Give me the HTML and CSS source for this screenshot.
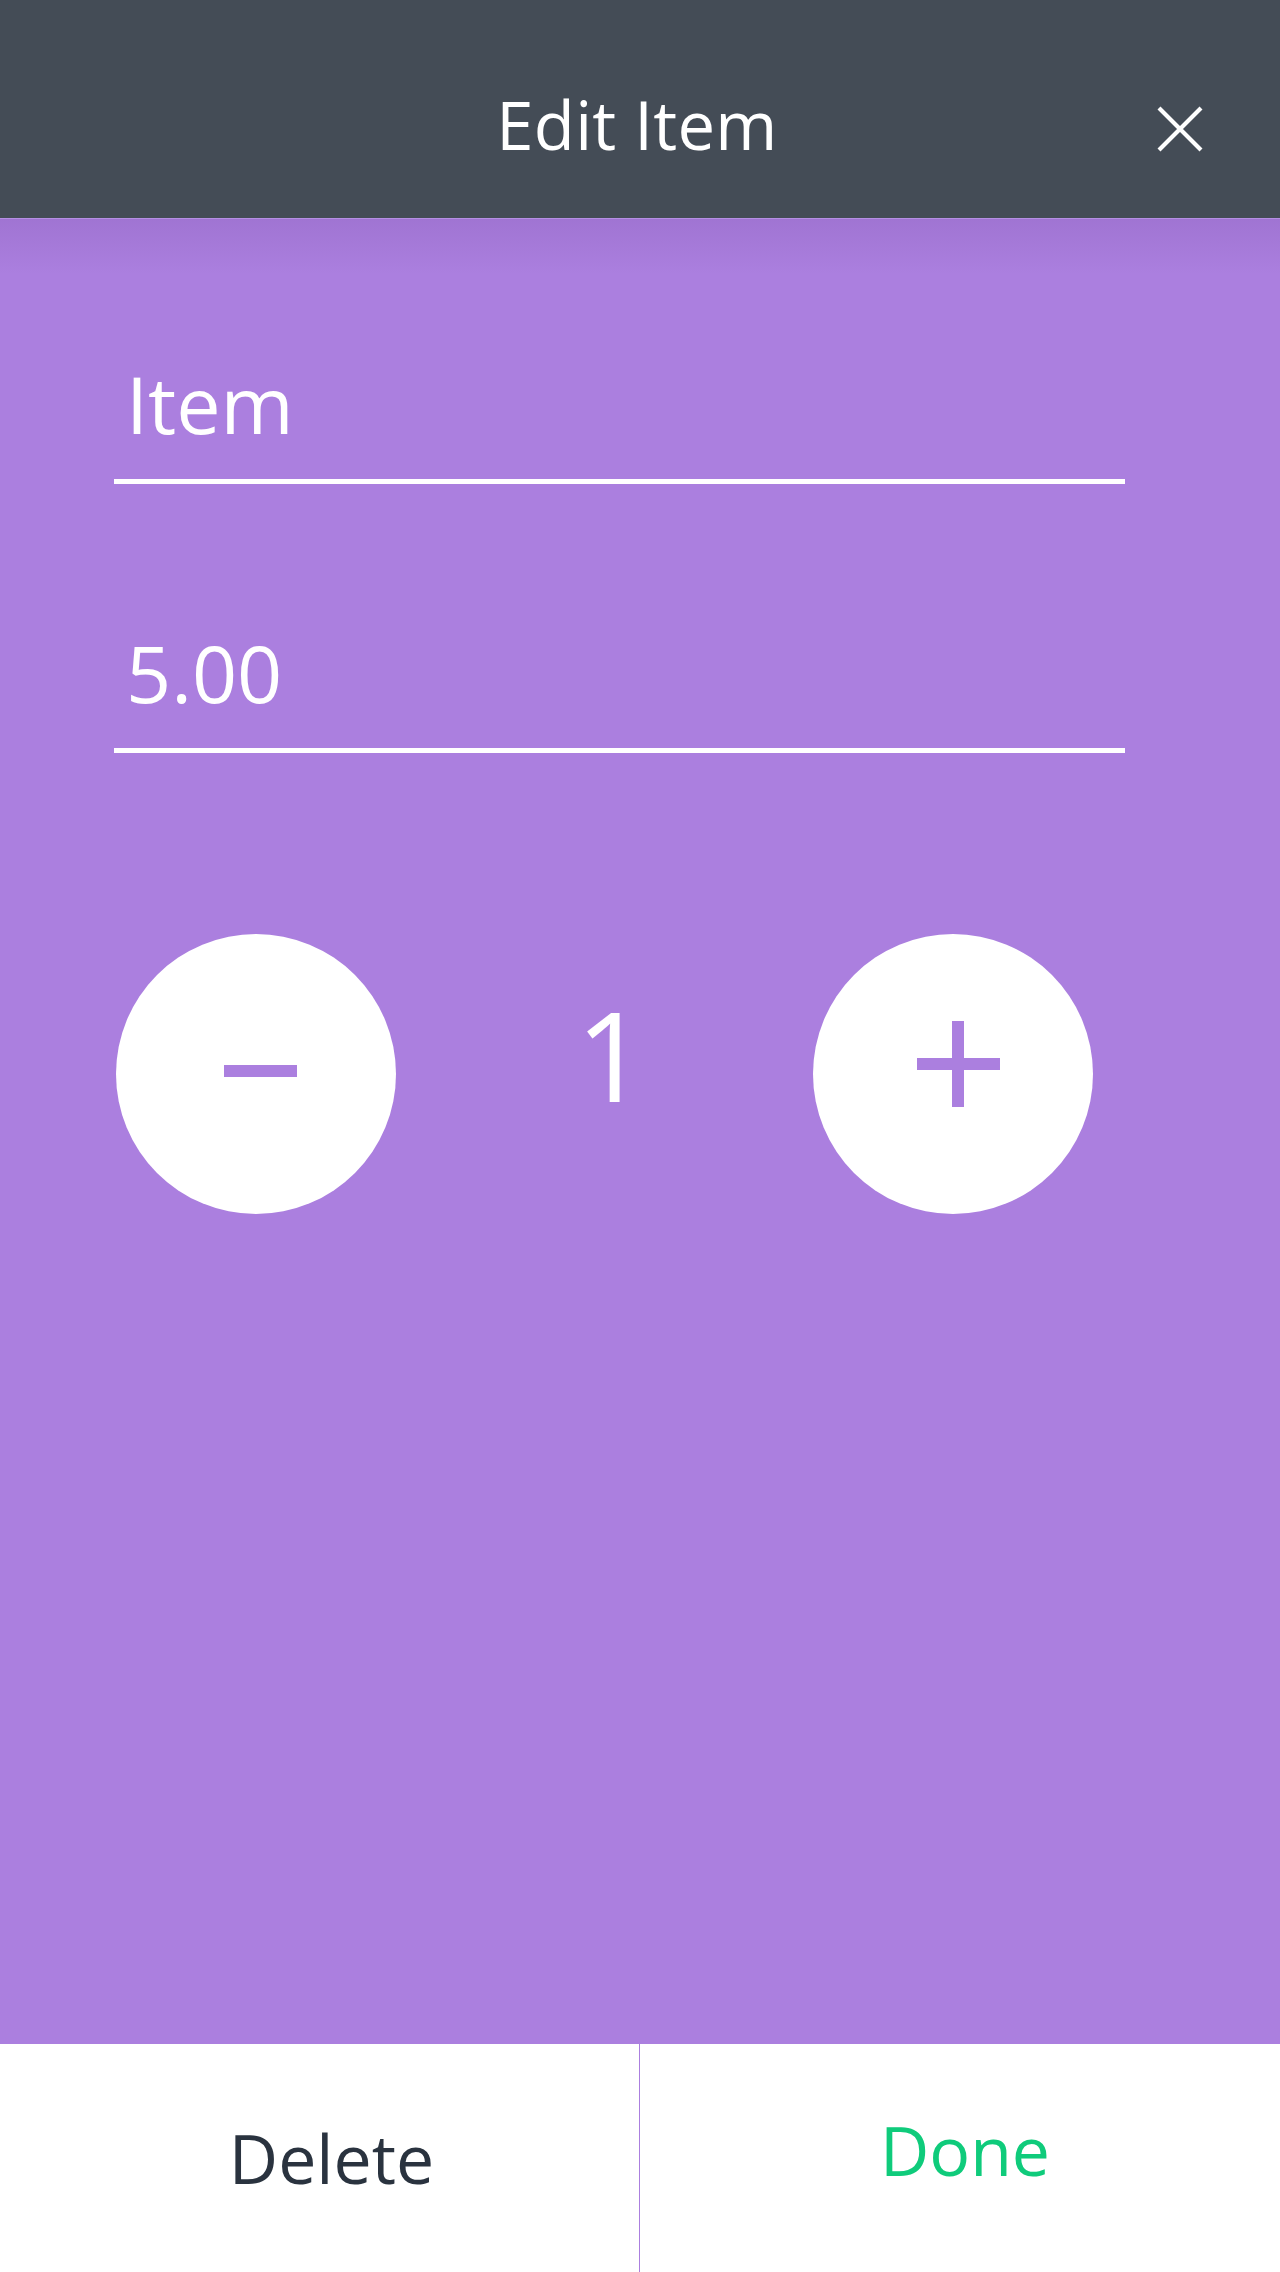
FILE: index.html
```html
<!DOCTYPE html>
<html lang="en">
<head>
<meta charset="utf-8">
<title>Edit Item</title>
<link rel="stylesheet" href="styles.css">
</head>
<body>
<div class="screen">
  <header class="topbar">
    <div class="spacer"></div>
    <h1 class="title">Edit Item</h1>
    <button class="close" aria-label="Close">
      <svg width="46" height="46" viewBox="0 0 46 46"><path d="M2 2 L44 44 M44 2 L2 44" stroke="#fff" stroke-width="4.2" fill="none"/></svg>
    </button>
  </header>
  <main class="content">
    <div class="field field-name"><span class="value">Item</span></div>
    <div class="field field-price"><span class="value">5.00</span></div>
    <div class="stepper">
      <button class="round" aria-label="Decrease">
        <svg width="280" height="280" viewBox="0 0 280 280"><rect x="108" y="131" width="73" height="12" fill="#ab7fdf"/></svg>
      </button>
      <span class="count">1</span>
      <button class="round" aria-label="Increase">
        <svg width="280" height="280" viewBox="0 0 280 280"><rect x="104" y="124" width="83" height="12" fill="#ab7fdf"/><rect x="139" y="87" width="12" height="86" fill="#ab7fdf"/></svg>
      </button>
    </div>
  </main>
  <footer class="actions">
    <button class="action delete"><span class="label">Delete</span></button>
    <button class="action done"><span class="label">Done</span></button>
  </footer>
</div>
</body>
</html>
```
FILE: styles.css
```css
html, body {
  margin: 0;
  padding: 0;
}
body {
  font-family: "Open Sans", "Liberation Sans", sans-serif;
  background: #ab7fdf;
}
button {
  font-family: inherit;
  border: 0;
  background: none;
  padding: 0;
  margin: 0;
  cursor: pointer;
}
.screen {
  width: 1280px;
  height: 2272px;
  display: flex;
  flex-direction: column;
}
.topbar {
  height: 218px;
  flex: 0 0 218px;
  box-sizing: border-box;
  background: #444c56;
  display: grid;
  grid-template-columns: 1fr auto 1fr;
  align-items: start;
  padding-top: 91px;
}
.title {
  margin: 0 6px 0 0;
  font-size: 67px;
  line-height: 1;
  font-weight: 400;
  color: #ffffff;
  letter-spacing: 0.3px;
}
.close {
  justify-self: end;
  margin-right: 77px;
  margin-top: 15px;
  width: 46px;
  height: 46px;
  display: block;
}
.close svg { display: block; }
.content {
  flex: 1 1 auto;
  background:
    linear-gradient(to bottom, rgba(255,255,255,0.12) 0, rgba(255,255,255,0.12) 1px, rgba(70,30,110,0.11) 1px, rgba(70,30,110,0) 56px),
    #ab7fdf;
  padding: 0 155px 0 114px;
  display: flex;
  flex-direction: column;
}
.field {
  border-bottom: 5px solid #ffffff;
  padding: 0 0 36px 12px;
}
.field-name { margin-top: 146px; }
.field-price { margin-top: 149px; }
.value {
  display: block;
  font-size: 79px;
  line-height: 1;
  color: #ffffff;
}
.stepper {
  margin-top: 181px;
  margin-left: 2px;
  width: 977px;
  display: flex;
  justify-content: space-between;
  align-items: flex-start;
}
.round {
  width: 280px;
  height: 280px;
  border-radius: 50%;
  background: #ffffff;
  display: block;
  overflow: hidden;
}
.round svg { display: block; }
.count {
  margin-top: 58px;
  font-size: 124px;
  line-height: 1;
  color: #ffffff;
  margin-left: 14px;
}
.actions {
  flex: 0 0 228px;
  height: 228px;
  background: #ffffff;
  display: flex;
}
.action {
  font-size: 68px;
  line-height: 1;
  display: flex;
  align-items: center;
  justify-content: center;
}
.delete {
  width: 640px;
  box-sizing: border-box;
  color: #2a333f;
  border-right: 1px solid #ab7fdf;
}
.delete .label { margin-left: 24px; }
.done {
  flex: 1 1 auto;
  color: #0fcb7b;
}
.done .label {
  margin-left: 10px;
  margin-bottom: 16px;
}
```
